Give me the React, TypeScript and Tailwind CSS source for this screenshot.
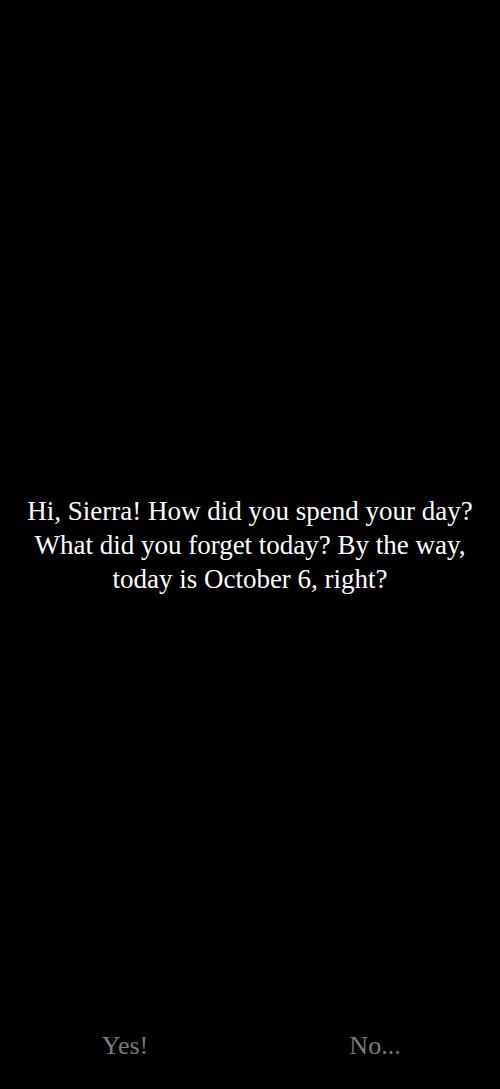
import React from 'react';

export default function App() {
  return (
    <div className="h-[1089px] w-full bg-black flex flex-col" style={{ fontFamily: '"Liberation Serif", serif' }}>
      <div className="flex-1 flex items-center justify-center px-6 pt-[64px]">
        <p className="text-white text-center text-[27px] leading-[34px]">
          Hi, Sierra! How did you spend your day? What did you forget today? By the way, today is October 6, right?
        </p>
      </div>
      <div className="grid grid-cols-2 pb-[24px]">
        <button className="text-[#7a7a7a] text-[26px] text-center">Yes!</button>
        <button className="text-[#7a7a7a] text-[26px] text-center">No...</button>
      </div>
    </div>
  );
}
